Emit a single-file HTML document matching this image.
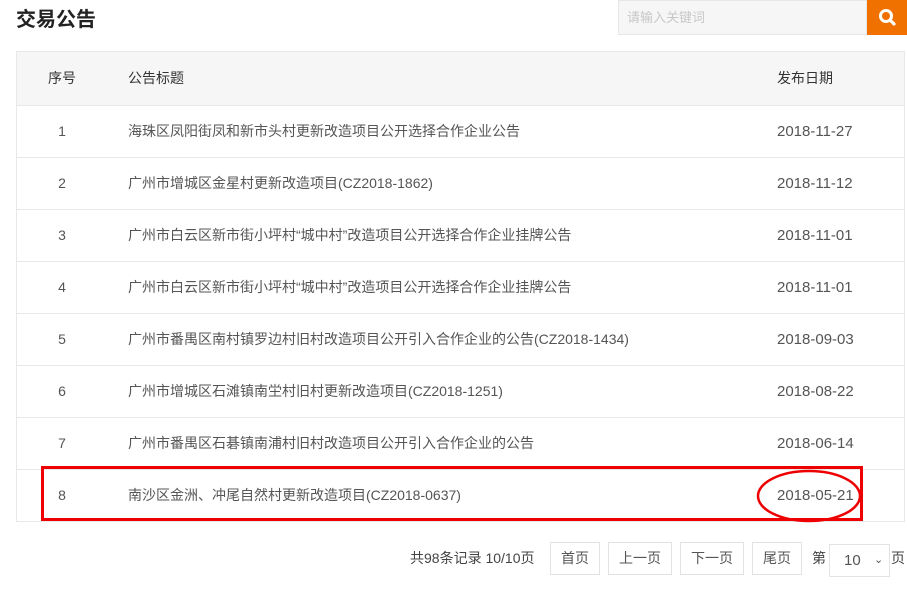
<!DOCTYPE html>
<html><head><meta charset="utf-8"><style>
body{margin:0;width:907px;height:589px;overflow:hidden;background:#fff;font-family:"Liberation Sans","Noto Sans CJK SC",sans-serif;color:#333;position:relative}
.t{position:absolute;left:16px;top:3px;font-size:20px;font-weight:bold;color:#222}
.inp{position:absolute;left:618px;top:0;width:249px;height:35px;background:#f6f6f6;border:1px solid #e6e6e6;box-sizing:border-box;font-size:13px;color:#c8c8c8;line-height:33px;padding-left:8px}
.btn{position:absolute;left:867px;top:0;width:40px;height:35px;background:#f07000}
.tbl{position:absolute;left:16px;top:51px;width:889px;border:1px solid #e8e8e8;box-sizing:border-box}
.r{position:relative;height:51px;border-top:1px solid #e8e8e8;font-size:14px;line-height:51px;color:#555}
.r.h{height:53px;border-top:none;background:#f6f6f6;color:#333;line-height:53px}
.r span{position:absolute}
.n{left:30px;width:30px;text-align:center}
.ti{left:111px}.d{left:760px;font-size:15px}
.h .d{font-size:14px}
.pg{position:absolute;top:542px;height:33px;border:1px solid #e3e3e3;box-sizing:border-box;font-size:14px;line-height:31px;text-align:center;color:#555}
.tx{position:absolute;top:542px;line-height:33px;font-size:14px;color:#444}
</style></head><body>
<div class="t">交易公告</div>
<div class="inp">请输入关键词</div>
<div class="btn"><svg width="40" height="35"><circle cx="19" cy="16" r="5.5" fill="none" stroke="#fff" stroke-width="3"/><line x1="23" y1="20" x2="27" y2="24" stroke="#fff" stroke-width="3.2" stroke-linecap="round"/></svg></div>
<div class="tbl">
<div class="r h"><span class="n">序号</span><span class="ti">公告标题</span><span class="d">发布日期</span></div>
<div class="r"><span class="n">1</span><span class="ti">海珠区凤阳街凤和新市头村更新改造项目公开选择合作企业公告</span><span class="d">2018-11-27</span></div>
<div class="r"><span class="n">2</span><span class="ti">广州市增城区金星村更新改造项目(CZ2018-1862)</span><span class="d">2018-11-12</span></div>
<div class="r"><span class="n">3</span><span class="ti">广州市白云区新市街小坪村“城中村”改造项目公开选择合作企业挂牌公告</span><span class="d">2018-11-01</span></div>
<div class="r"><span class="n">4</span><span class="ti">广州市白云区新市街小坪村“城中村”改造项目公开选择合作企业挂牌公告</span><span class="d">2018-11-01</span></div>
<div class="r"><span class="n">5</span><span class="ti">广州市番禺区南村镇罗边村旧村改造项目公开引入合作企业的公告(CZ2018-1434)</span><span class="d">2018-09-03</span></div>
<div class="r"><span class="n">6</span><span class="ti">广州市增城区石滩镇南坣村旧村更新改造项目(CZ2018-1251)</span><span class="d">2018-08-22</span></div>
<div class="r"><span class="n">7</span><span class="ti">广州市番禺区石碁镇南浦村旧村改造项目公开引入合作企业的公告</span><span class="d">2018-06-14</span></div>
<div class="r"><span class="n">8</span><span class="ti">南沙区金洲、冲尾自然村更新改造项目(CZ2018-0637)</span><span class="d">2018-05-21</span></div>
</div>
<div style="position:absolute;left:41px;top:466px;width:822px;height:55px;border:3px solid #e00;box-sizing:border-box"></div>
<svg style="position:absolute;left:755px;top:468px" width="110" height="56"><ellipse cx="54" cy="28" rx="51" ry="25" fill="none" stroke="#e00" stroke-width="2.5"/></svg>
<div class="tx" style="left:410px">共98条记录 10/10页</div>
<div class="pg" style="left:550px;width:50px">首页</div>
<div class="pg" style="left:608px;width:64px">上一页</div>
<div class="pg" style="left:680px;width:64px">下一页</div>
<div class="pg" style="left:752px;width:50px">尾页</div>
<div class="tx" style="left:812px">第</div>
<div class="pg" style="left:829px;top:544px;width:61px;text-align:left;padding-left:14px;font-size:15px">10<span style="position:absolute;left:44px;font-size:11px">⌄</span></div>
<div class="tx" style="left:891px">页</div>
</body></html>
